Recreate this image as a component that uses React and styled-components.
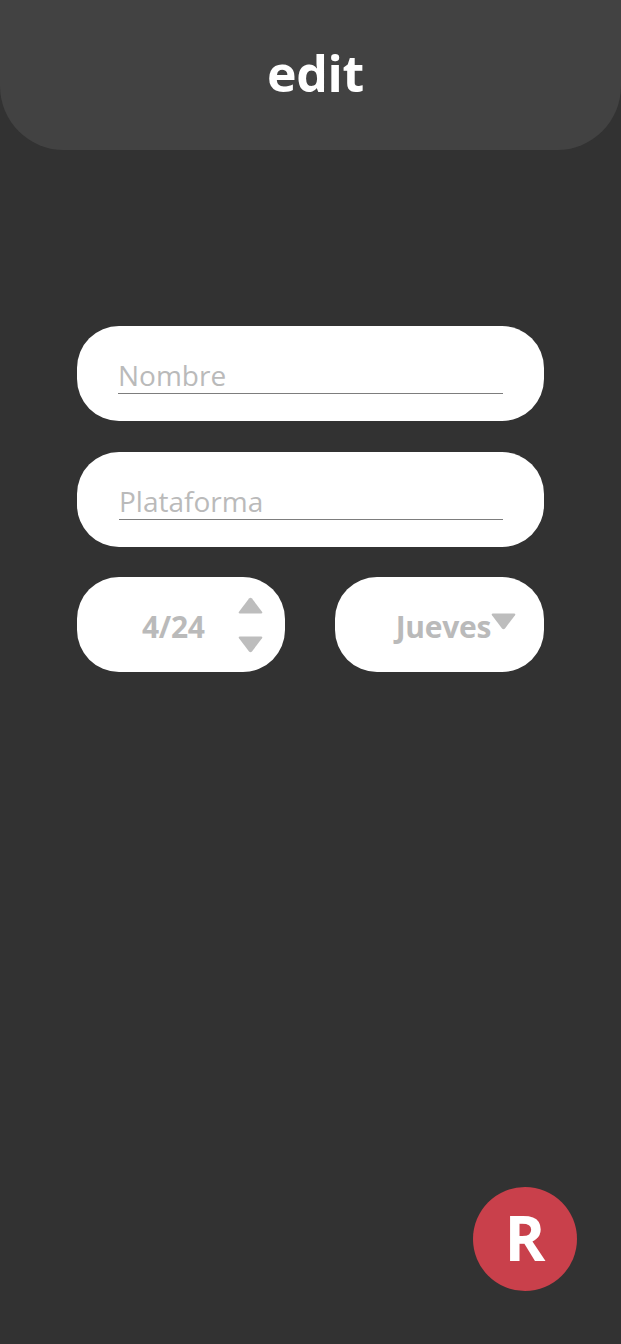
import React from 'react'
import styled, { createGlobalStyle } from 'styled-components'

const Global = createGlobalStyle`
  body {
    margin: 0;
    background: #323232;
    font-family: "Open Sans", "Noto Sans", sans-serif;
  }
`

const Page = styled.div`
  position: relative;
  min-height: 1344px;
  background: #323232;
`

const Header = styled.header`
  height: 150px;
  background: #424242;
  border-radius: 0 0 64px 64px;
  display: flex;
  justify-content: center;
  align-items: center;
`

const Title = styled.h1`
  margin: 0 0 0 10px;
  padding-bottom: 4px;
  color: #fff;
  font-size: 50px;
  font-weight: 700;
  letter-spacing: -0.3px;
`

const Form = styled.div`
  width: 467px;
  margin: 176px auto 0;
  display: flex;
  flex-direction: column;
  gap: 31px;
`

const Pill = styled.div`
  height: 95px;
  background: #fff;
  border-radius: 42px;
  box-sizing: border-box;
  display: flex;
  align-items: center;
`

const FieldPill = styled(Pill)`
  padding: 0 41px 0 ${p => p.$left || 41}px;
`

const Field = styled.input`
  width: 100%;
  margin-top: 6px;
  border: none;
  border-bottom: 1.5px solid #7d7d7d;
  background: transparent;
  font-family: inherit;
  font-size: 28px;
  line-height: 32px;
  padding: 0 0 2px;
  color: #666;
  outline: none;
  &::placeholder {
    color: #bababa;
  }
`

const Row = styled.div`
  display: flex;
  gap: 50px;
  margin-top: -1px;
`

const Stepper = styled(Pill)`
  width: 208px;
  padding: 0 22px 0 65px;
`

const Select = styled(Pill)`
  width: 209px;
  justify-content: flex-end;
  padding: 0 28px 0 0;
`

const Value = styled.span`
  margin-top: 4px;
  font-size: 30px;
  font-weight: 700;
  color: #bababa;
  letter-spacing: -0.3px;
`

const Arrows = styled.div`
  margin-left: auto;
  display: flex;
  flex-direction: column;
  gap: 20px;
`

const Tri = styled.svg`
  display: block;
  width: 25px;
  height: 18px;
  fill: #bdbdbd;
`

const Fab = styled.button`
  position: absolute;
  right: 44px;
  bottom: 53px;
  width: 104px;
  height: 104px;
  border: none;
  border-radius: 50%;
  background: #c9404b;
  color: #fff;
  font-family: inherit;
  font-size: 62px;
  font-weight: 700;
  display: flex;
  align-items: center;
  justify-content: center;
  padding: 0 0 4px;
`

function Triangle ({ down }) {
  return (
    <Tri viewBox='0 0 25 18'>
      {down
        ? <path d='M2 1.5 Q0 1.5 1 3.2 L11 16.5 Q12.5 18 14 16.5 L24 3.2 Q25 1.5 23 1.5 Z' />
        : <path d='M2 16.5 Q0 16.5 1 14.8 L11 1.5 Q12.5 0 14 1.5 L24 14.8 Q25 16.5 23 16.5 Z' />}
    </Tri>
  )
}

export default function App () {
  return (
    <Page>
      <Global />
      <Header><Title>edit</Title></Header>
      <Form>
        <FieldPill>
          <Field placeholder='Nombre' />
        </FieldPill>
        <FieldPill $left={42}>
          <Field placeholder='Plataforma' />
        </FieldPill>
        <Row>
          <Stepper>
            <Value>4/24</Value>
            <Arrows>
              <Triangle />
              <Triangle down />
            </Arrows>
          </Stepper>
          <Select>
            <Value>Jueves</Value>
            <div style={{ marginTop: -8 }}><Triangle down /></div>
          </Select>
        </Row>
      </Form>
      <Fab>R</Fab>
    </Page>
  )
}
